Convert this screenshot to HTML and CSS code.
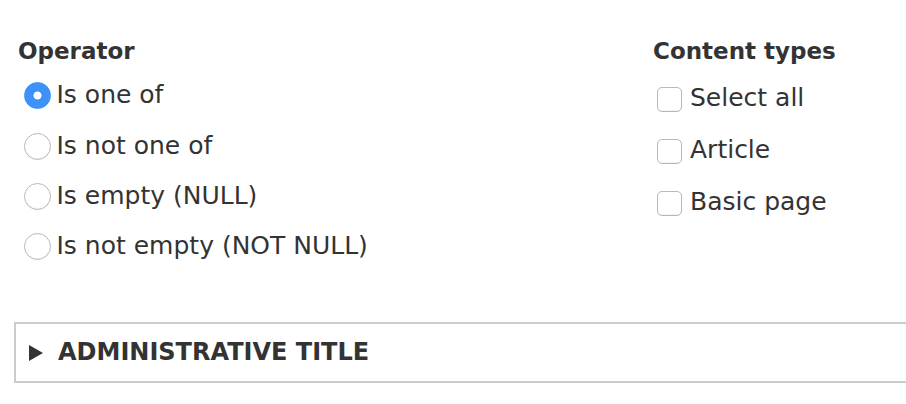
FILE: index.html
```html
<!DOCTYPE html>
<html lang="en">

<head>
    <meta charset="UTF-8">
    <meta name="viewport" content="width=device-width, initial-scale=1.0">
    <title>Content type filter</title>

    <link rel="stylesheet" href="styles.css">
</head>

<body>
    <div class="filter-form">
        <fieldset class="operator">
            <legend class="group-title">Operator</legend>
            <label class="option"><input type="radio" name="operator" value="in" checked> Is one of</label>
            <label class="option"><input type="radio" name="operator" value="not in"> Is not one of</label>
            <label class="option"><input type="radio" name="operator" value="empty"> Is empty (NULL)</label>
            <label class="option"><input type="radio" name="operator" value="not empty"> Is not empty (NOT NULL)</label>
        </fieldset>

        <fieldset class="types">
            <legend class="group-title">Content types</legend>
            <label class="option"><input type="checkbox" name="all"> Select all</label>
            <label class="option"><input type="checkbox" name="type[article]"> Article</label>
            <label class="option"><input type="checkbox" name="type[page]"> Basic page</label>
        </fieldset>
    </div>

    <details class="admin-title">
        <summary>Administrative title</summary>
    </details>
</body>

</html>
```

FILE: styles.css
```css
body {
    margin: 0;
    overflow: hidden;
    background: #fff;
    color: #333;
    font-family: "DejaVu Sans", "Liberation Sans", sans-serif;
}

.filter-form {
    display: flex;
    padding: 36px 0 0 18px;
}

fieldset {
    margin: 0;
    padding: 0;
    border: none;
    min-width: 0;
}

.operator {
    width: 635px;
}

.group-title {
    padding: 0;
    font-size: 23px;
    font-weight: bold;
    line-height: 30px;
    margin-bottom: 14.35px;
}

.option {
    display: flex;
    align-items: center;
    height: 30px;
    font-size: 25px;
    line-height: 30px;
    margin-bottom: 20.3px;
    white-space: nowrap;
}

.types .group-title {
    margin-bottom: 17.35px;
}

.types .option {
    margin-bottom: 21.6px;
}

input[type="radio"],
input[type="checkbox"] {
    -webkit-appearance: none;
    appearance: none;
    flex: none;
    margin: 0;
    background: #fff;
    border: 1px solid #b8b8b8;
    box-shadow: inset 0 -1px 0 rgba(0, 0, 0, 0.05);
}

input[type="radio"] {
    width: 27px;
    height: 27px;
    margin: 1px 5.5px 0 6px;
    border-radius: 50%;
}

input[type="radio"]:checked {
    background: radial-gradient(circle, #fff 0 3.6px, #3c92f6 4.4px);
    border-color: #3a8ef2;
    box-shadow: none;
}

input[type="checkbox"] {
    width: 25px;
    height: 25px;
    margin: 3px 8px 0 4px;
    border-radius: 5px;
}

.admin-title {
    margin: 40px -20px 0 14px;
    border: 2px solid #ccc;
}

.admin-title summary {
    display: flex;
    align-items: center;
    height: 57px;
    padding-left: 13px;
    list-style: none;
    font-size: 24px;
    font-weight: bold;
    text-transform: uppercase;
    cursor: pointer;
}

.admin-title summary::-webkit-details-marker {
    display: none;
}

.admin-title summary::before {
    content: "";
    margin: 1px 15px 0 0;
    border-left: 14px solid #333;
    border-top: 8.5px solid transparent;
    border-bottom: 8.5px solid transparent;
}
```
